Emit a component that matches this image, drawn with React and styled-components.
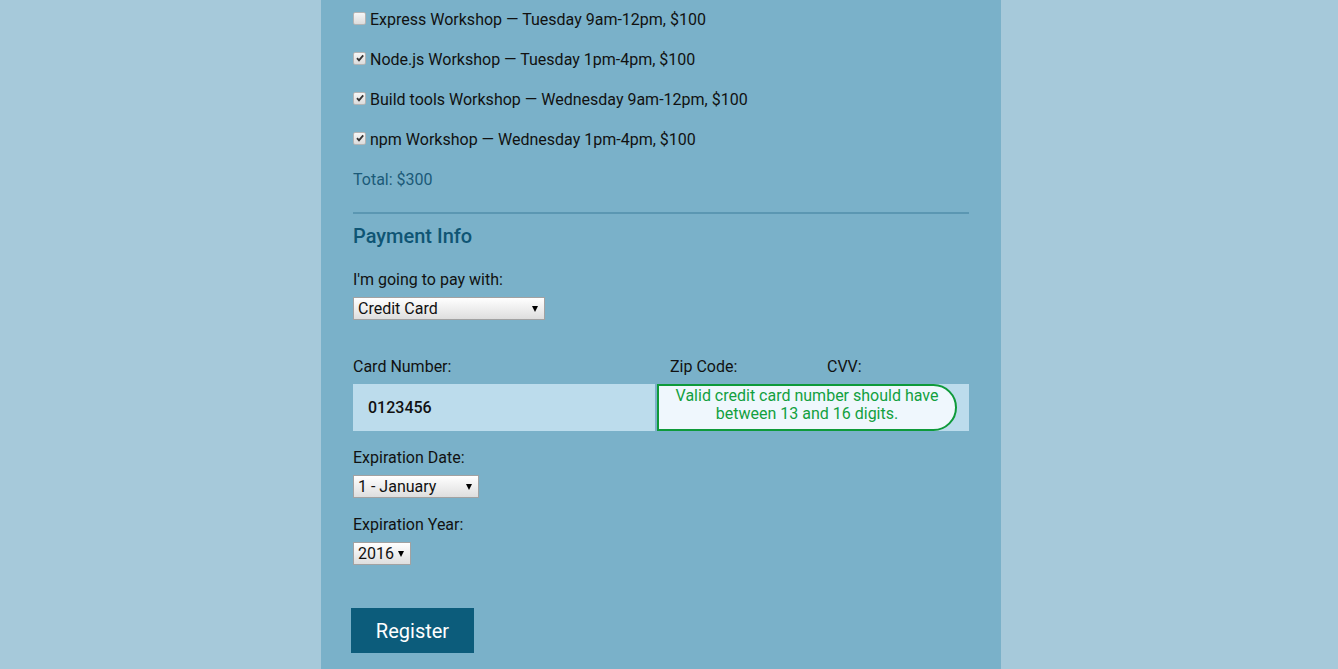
import React from "react";
import styled, { createGlobalStyle } from "styled-components";

const GlobalStyle = createGlobalStyle`
  html, body {
    margin: 0;
    padding: 0;
  }
  body {
    background: #a6c9da;
    font-family: Roboto, "Liberation Sans", sans-serif;
    font-size: 16px;
    color: #111;
    padding-right: 16px;
  }
`;

const WORKSHOPS = [
  { name: "Express Workshop", time: "Tuesday 9am-12pm, $100", checked: false },
  { name: "Node.js Workshop", time: "Tuesday 1pm-4pm, $100", checked: true },
  { name: "Build tools Workshop", time: "Wednesday 9am-12pm, $100", checked: true },
  { name: "npm Workshop", time: "Wednesday 1pm-4pm, $100", checked: true },
];

const Checkbox = ({ checked }) => (
  <Box>
    {checked && (
      <svg width="10" height="10" viewBox="0 0 10 10">
        <path d="M2 5.2 L4 7.4 L8.2 2.4" fill="none" stroke="#333" strokeWidth="1.8" />
      </svg>
    )}
  </Box>
);

const Select = ({ width, children }) => (
  <SelectWrap style={{ "--width": width + "px" }}>
    <NativeSelect>{children}</NativeSelect>
  </SelectWrap>
);

const App = () => {
  return (
    <>
      <GlobalStyle />
      <Container>
        <Activities>
          {WORKSHOPS.map((w) => (
            <Activity key={w.name}>
              <Checkbox checked={w.checked} />
              {w.name} — {w.time}
            </Activity>
          ))}
          <Total>Total: $300</Total>
        </Activities>

        <Fieldset>
          <Legend>Payment Info</Legend>
          <Label>I'm going to pay with:</Label>
          <Select width={192}>
            <option>Credit Card</option>
          </Select>

          <CardRow>
            <Field>
              <Label>Card Number:</Label>
              <CardInputWrap>
                <Input defaultValue="0123456" $bold />
                <Tooltip>
                  Valid credit card number should have
                  <br />
                  between 13 and 16 digits.
                </Tooltip>
              </CardInputWrap>
            </Field>
            <Field>
              <Label>Zip Code:</Label>
              <Input />
            </Field>
            <Field>
              <Label>CVV:</Label>
              <Input />
            </Field>
          </CardRow>

          <Label $top={16}>Expiration Date:</Label>
          <Select width={126}>
            <option>1 - January</option>
          </Select>

          <Label $top={16}>Expiration Year:</Label>
          <Select width={58}>
            <option>2016</option>
          </Select>
        </Fieldset>

        <Button>Register</Button>
      </Container>
    </>
  );
};

const Container = styled.main`
  width: 680px;
  min-height: 669px;
  margin: 0 auto;
  padding: 0 32px;
  box-sizing: border-box;
  background: #7ab1c9;
`;

const Activities = styled.div`
  display: flex;
  flex-direction: column;
  padding-bottom: 12px;
  border-bottom: 2px solid #5b97b2;
`;

const Activity = styled.label`
  display: flex;
  align-items: center;
  height: 40px;
  line-height: 40px;
  color: #111;
`;

const Box = styled.span`
  display: inline-flex;
  align-items: center;
  justify-content: center;
  width: 11px;
  height: 11px;
  margin-right: 4px;
  margin-top: -4px;
  border: 1px solid #b4b4b4;
  border-radius: 2px;
  background: linear-gradient(#f6f6f6, #dcdcdc);
`;

const Total = styled.div`
  height: 40px;
  line-height: 40px;
  color: #1b5a78;
`;

const Fieldset = styled.div`
  display: flex;
  flex-direction: column;
  align-items: flex-start;
`;

const Legend = styled.h2`
  margin: 10px 0 0;
  font-size: 20px;
  line-height: 24px;
  font-weight: 500;
  color: #0f5574;
`;

const Label = styled.div`
  margin-top: ${(p) => (p.$top ?? 21) + "px"};
  line-height: 22px;
  color: #111;
`;

const SelectWrap = styled.div`
  position: relative;
  width: var(--width);
  margin-top: 6px;

  &::after {
    content: "";
    position: absolute;
    right: 7px;
    top: 9px;
    border-left: 3.5px solid transparent;
    border-right: 3.5px solid transparent;
    border-top: 6px solid #000;
    pointer-events: none;
  }
`;

const NativeSelect = styled.select`
  appearance: none;
  display: block;
  width: 100%;
  height: 23px;
  margin: 0;
  padding: 0 0 0 4px;
  border: 1px solid #a2a2a2;
  border-radius: 0;
  background: linear-gradient(#ffffff, #dedede);
  font-family: inherit;
  font-size: 16px;
  color: #111;
`;

const CardRow = styled.div`
  display: grid;
  grid-template-columns: 302px 142px 142px;
  column-gap: 15px;
  margin-top: 36px;
  width: 616px;
`;

const Field = styled.div`
  display: flex;
  flex-direction: column;

  & > div:first-child {
    margin-top: 0;
  }
`;

const CardInputWrap = styled.div`
  position: relative;
  margin-top: 6px;
`;

const Input = styled.input`
  display: block;
  box-sizing: border-box;
  width: 100%;
  height: 47px;
  margin-top: ${(p) => (p.$bold ? 0 : 6)}px;
  padding: 0 15px;
  border: none;
  background: #bcdcec;
  font-family: inherit;
  font-size: 16px;
  font-weight: ${(p) => (p.$bold ? 500 : 400)};
  color: #111;
  outline: none;
`;

const Tooltip = styled.div`
  position: absolute;
  top: 0;
  left: calc(100% + 2px);
  box-sizing: border-box;
  width: 300px;
  height: 47px;
  padding-top: 1px;
  border: 2px solid #0e9a3a;
  border-radius: 0 24px 24px 0;
  background: #eff7fd;
  color: #12a03f;
  font-size: 16px;
  line-height: 18px;
  text-align: center;
`;

const Button = styled.button`
  display: block;
  width: 123px;
  height: 45px;
  margin: 43px 0 0 -2px;
  border: none;
  background: #0c5c7b;
  color: #fff;
  font-family: inherit;
  font-size: 20px;
`;

export default App;
